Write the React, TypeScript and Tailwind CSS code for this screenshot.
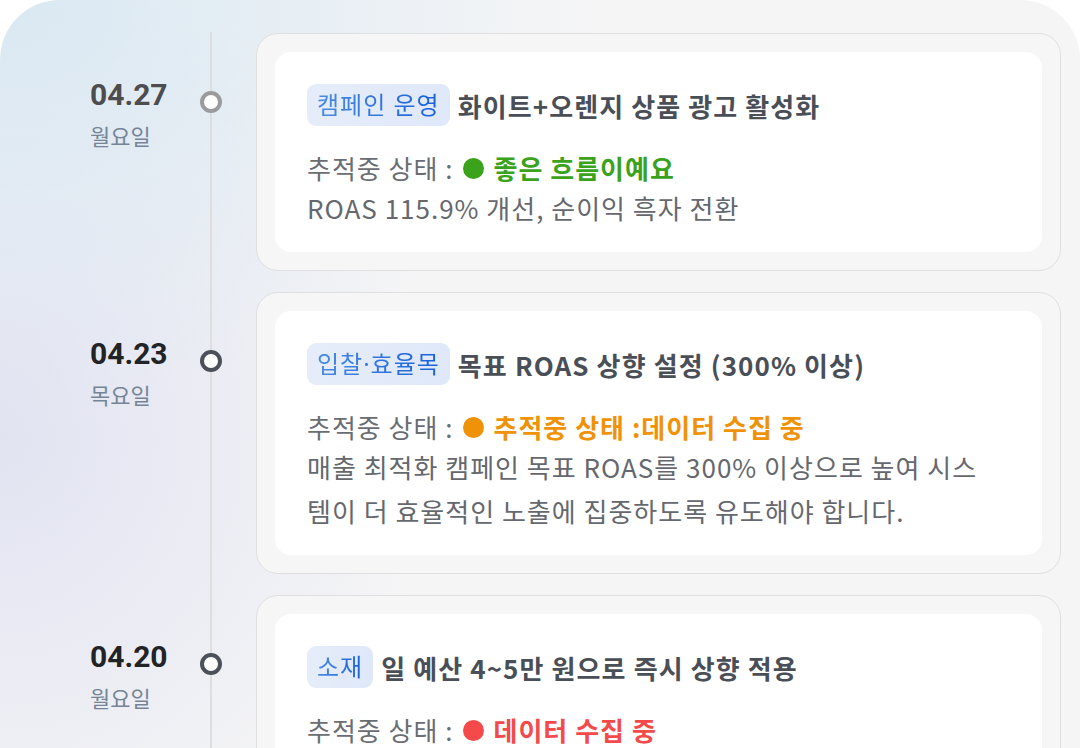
import React from 'react';

type Status = 'good' | 'pending' | 'none';

interface TimelineItem {
    date: string;
    weekday: string;
    tag: string;
    title: string;
    status: Status;
    statusText: string;
    desc: string;
    muted?: boolean;
}

const items: TimelineItem[] = [
    {
        date: '04.27',
        weekday: '월요일',
        tag: '캠페인 운영',
        title: '화이트+오렌지 상품 광고 활성화',
        status: 'good',
        statusText: '좋은 흐름이예요',
        desc: 'ROAS 115.9% 개선, 순이익 흑자 전환',
        muted: true,
    },
    {
        date: '04.23',
        weekday: '목요일',
        tag: '입찰·효율목',
        title: '목표 ROAS 상향 설정 (300% 이상)',
        status: 'pending',
        statusText: '추적중 상태 :데이터 수집 중',
        desc: '매출 최적화 캠페인 목표 ROAS를 300% 이상으로 높여 시스템이 더 효율적인 노출에 집중하도록 유도해야 합니다.',
    },
    {
        date: '04.20',
        weekday: '월요일',
        tag: '소재',
        title: '일 예산 4~5만 원으로 즉시 상향 적용',
        status: 'none',
        statusText: '데이터 수집 중',
        desc: '예산 상향 후 3일간 노출과 전환 추이를 확인합니다.',
    },
];

const statusStyle: Record<Status, { dot: string; text: string }> = {
    good: { dot: 'bg-[#3ba21c]', text: 'text-[#3ba21c]' },
    pending: { dot: 'bg-[#ef9208]', text: 'text-[#ef9208]' },
    none: { dot: 'bg-[#f44a4a]', text: 'text-[#f44a4a]' },
};

function Row({ item }: { item: TimelineItem }) {
    const s = statusStyle[item.status];
    return (
        <div className="flex items-start">
            {/* date column */}
            <div className="w-[110px] shrink-0 pt-[44px]">
                <div
                    className={`font-['Roboto','Noto_Sans_CJK_KR',sans-serif] text-[30px] font-bold leading-9 ${
                        item.muted ? 'text-[#4d4d4f]' : 'text-[#222326]'
                    }`}
                >
                    {item.date}
                </div>
                <div className="mt-[7px] text-[22px] leading-[30px] text-[#758596]">{item.weekday}</div>
            </div>

            {/* dot on the line */}
            <div className="w-[22px] shrink-0 pt-[58px]">
                <div
                    className={`relative h-[22px] w-[22px] rounded-full border-[4px] bg-white ${
                        item.muted ? 'border-[#9b9b9d]' : 'border-[#4c5159]'
                    }`}
                />
            </div>

            {/* card */}
            <div className="ml-[34px] flex-1 rounded-[22px] border border-[#dfdfe0] bg-[#f6f6f7] p-[18px]">
                <div className="rounded-[16px] bg-white pb-[22px] pl-8 pr-12 pt-8">
                    <div className="flex h-[42px] items-center gap-2">
                        <span className="flex h-[42px] items-center rounded-[9px] bg-linear-to-r from-[#e6edf9] to-[#dfe8fa] px-[10px] font-['Noto_Sans','Noto_Sans_CJK_KR',sans-serif] text-[24px] tracking-[1px]">
                            <span className="bg-linear-to-r from-[#4a8ae2] to-[#1660d8] bg-clip-text text-transparent">
                                {item.tag}
                            </span>
                        </span>
                        <span className="text-[26px] font-bold tracking-[1.1px] text-[#4a4f57]">{item.title}</span>
                    </div>
                    <div className="mt-[22px] flex items-center text-[26px] leading-10 tracking-[1px] text-[#6a6d72]">
                        <span>추적중 상태 :</span>
                        <span className={`ml-[10px] mr-[9px] inline-block h-[21px] w-[21px] rounded-full ${s.dot}`} />
                        <span className={`font-bold ${s.text}`}>{item.statusText}</span>
                    </div>
                    <p className="-mt-[2px] text-[26px] leading-[44px] tracking-[1px] text-[#65686d]">{item.desc}</p>
                </div>
            </div>
        </div>
    );
}

export default function App() {
    return (
        <div className="min-h-screen bg-white font-['Noto_Sans_CJK_KR','Noto_Sans',sans-serif]">
            <div className="relative min-h-[748px] overflow-hidden rounded-[60px] bg-[#f5f5f6] bg-[radial-gradient(ellipse_55%_45%_at_0%_0%,#d9e8f2_0%,transparent_100%),radial-gradient(ellipse_40%_55%_at_0%_50%,#e1e3f1_0%,transparent_100%)] pb-10 pl-[90px] pr-[19px] pt-[33px]">
                {/* timeline line */}
                <div className="absolute bottom-0 left-[210px] top-[32px] w-[2px] bg-[#dedede]" />
                <div className="flex flex-col gap-[21px]">
                    {items.map((item) => (
                        <Row key={item.date} item={item} />
                    ))}
                </div>
            </div>
        </div>
    );
}
